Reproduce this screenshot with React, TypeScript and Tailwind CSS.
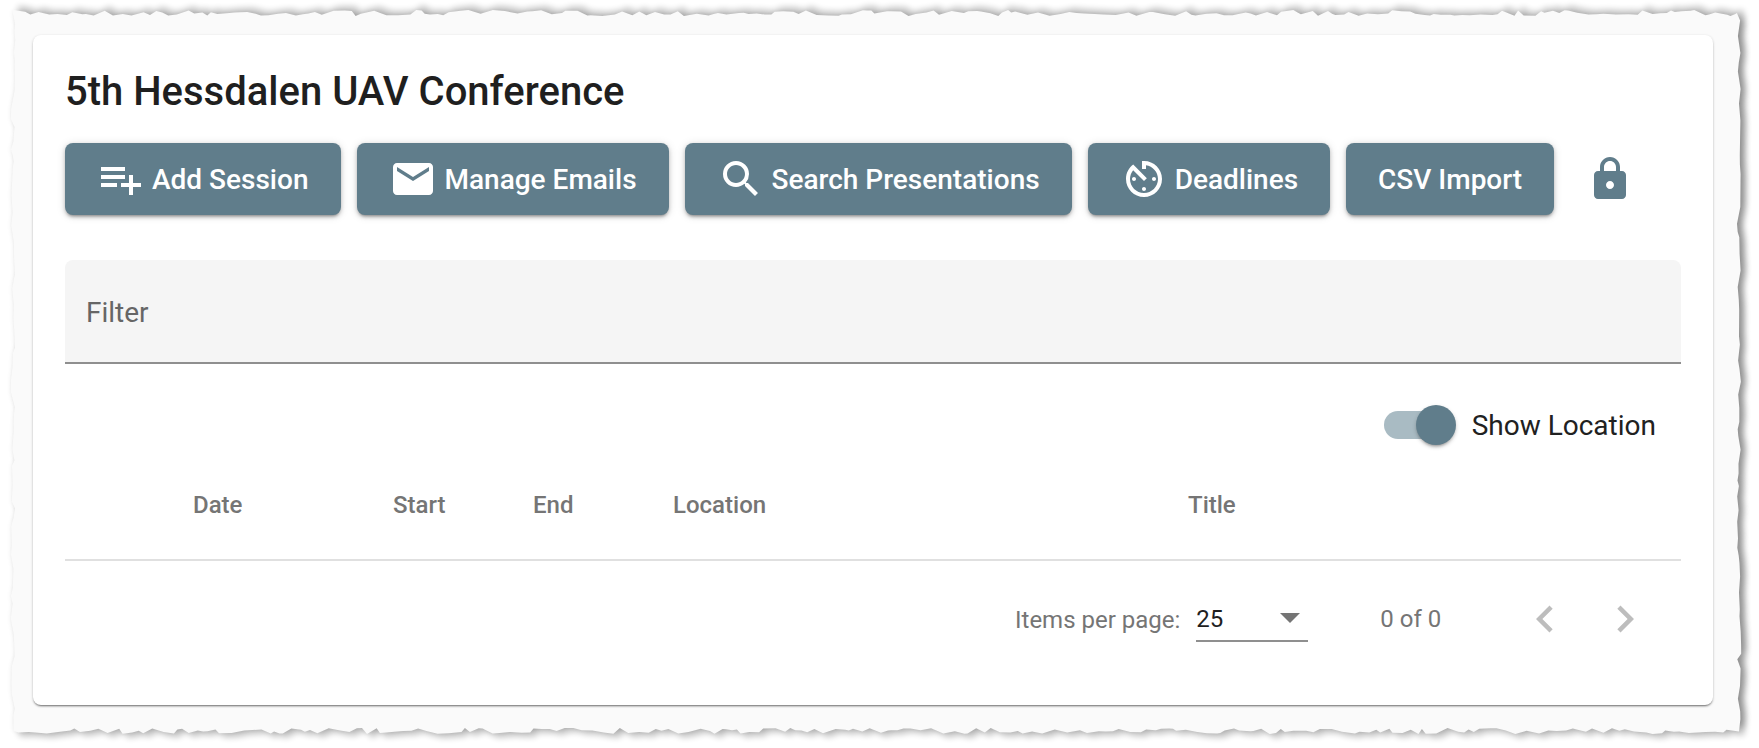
const ROBOTO = "font-['Roboto',sans-serif]"

// torn paper outline, seeded so every render gives the same edge
function tornEdge() {
  let seed = 7
  const rnd = () => {
    seed = (seed * 16807) % 2147483647
    return seed / 2147483647
  }
  const pts: string[] = []
  const L = 13, R = 1739, T = 13, B = 731
  const tooth = (amp: number) => (rnd() - 0.5) * 2 * amp
  for (let x = L; x < R; x += 3 + rnd() * 10) pts.push(`${x.toFixed(1)},${(T + tooth(3)).toFixed(1)}`)
  for (let y = T; y < B; y += 5 + rnd() * 14) pts.push(`${(R + tooth(2.2)).toFixed(1)},${y.toFixed(1)}`)
  for (let x = R; x > L; x -= 3 + rnd() * 10) pts.push(`${x.toFixed(1)},${(B + tooth(3)).toFixed(1)}`)
  for (let y = B; y > T; y -= 5 + rnd() * 14) pts.push(`${(L + tooth(2.2)).toFixed(1)},${y.toFixed(1)}`)
  return pts.join(' ')
}

function Paper() {
  const pts = tornEdge()
  return (
    <svg className="absolute inset-0" width="1759" height="748" viewBox="0 0 1759 748">
      <defs>
        <filter id="soft" x="-2%" y="-4%" width="104%" height="108%">
          <feGaussianBlur stdDeviation="3" />
        </filter>
        <filter id="faint" x="-2%" y="-4%" width="104%" height="108%">
          <feGaussianBlur stdDeviation="2" />
        </filter>
      </defs>
      <polygon points={pts} fill="#000" opacity="0.05" filter="url(#faint)" transform="translate(-1 0)" />
      <polygon points={pts} fill="#000" opacity="0.24" filter="url(#soft)" transform="translate(5 -4)" />
      <polygon points={pts} fill="#000" opacity="0.24" filter="url(#soft)" transform="translate(5 4)" />
      <polygon points={pts} fill="#fafafa" />
    </svg>
  )
}

function Btn({ icon, label, wide }: { icon?: React.ReactNode; label: string; wide?: boolean }) {
  return (
    <button className={`${wide ? 'pl-[32px] pr-[33px]' : 'px-[32px]'} h-[72px] shrink-0 flex items-center gap-[7px] rounded-[8px] bg-[#607d8b] text-white text-[28px] font-medium shadow-[0_3px_3px_-2px_rgba(0,0,0,0.3),0_2px_4px_rgba(0,0,0,0.2),0_1px_10px_rgba(0,0,0,0.12)]`}>
      {icon}
      <span className="pt-[2px]">{label}</span>
    </button>
  )
}

const Icon = ({ d }: { d: string }) => (
  <svg width="48" height="48" viewBox="0 0 24 24" fill="#fff">
    <path d={d} />
  </svg>
)

const PLAYLIST_ADD = 'M14 10H2v2h12v-2zm0-4H2v2h12V6zm4 8v-4h-2v4h-4v2h4v4h2v-4h4v-2h-4zM2 16h8v-2H2v2z'
const EMAIL = 'M20 4H4c-1.1 0-1.99.9-1.99 2L2 18c0 1.1.9 2 2 2h16c1.1 0 2-.9 2-2V6c0-1.1-.9-2-2-2zm0 4l-8 5-8-5V6l8 5 8-5v2z'
const SEARCH = 'M15.5 14h-.79l-.28-.27A6.47 6.47 0 0 0 16 9.5 6.5 6.5 0 1 0 9.5 16c1.61 0 3.09-.59 4.23-1.57l.27.28v.79l5 4.99L20.49 19l-4.99-5zm-6 0C7.01 14 5 11.99 5 9.5S7.01 5 9.5 5 14 7.01 14 9.5 11.99 14 9.5 14z'
const AV_TIMER = 'M11 17c0 .55.45 1 1 1s1-.45 1-1-.45-1-1-1-1 .45-1 1zm0-14v4h2V5.08c3.39.49 6 3.39 6 6.92 0 3.87-3.13 7-7 7s-7-3.13-7-7c0-1.68.59-3.22 1.58-4.42L12 13l1.41-1.41-6.8-6.8v.02C4.42 6.45 3 9.05 3 12c0 4.97 4.02 9 9 9 4.97 0 9-4.03 9-9s-4.03-9-9-9h-1zm7 9c0-.55-.45-1-1-1s-1 .45-1 1 .45 1 1 1 1-.45 1-1zM6 12c0 .55.45 1 1 1s1-.45 1-1-.45-1-1-1-1 .45-1 1z'

function Toggle() {
  return (
    <div className="relative w-[64px] h-[28px] rounded-full bg-[#a9bbc3]">
      <div className="absolute right-[-8px] top-[-6px] w-[40px] h-[40px] rounded-full bg-[#607d8b] shadow-[0_3px_3px_-2px_rgba(0,0,0,0.3),0_2px_4px_rgba(0,0,0,0.2)]" />
    </div>
  )
}

export default function App() {
  return (
    <div className={`relative w-[1759px] h-[748px] overflow-hidden bg-white ${ROBOTO}`}>
      <Paper />
      <div className="relative pl-[33px] pt-[35px]">
        <div className="w-[1680px] h-[670px] bg-white rounded-[8px] shadow-[0_2px_2px_-1px_rgba(0,0,0,0.45),0_1px_3px_rgba(0,0,0,0.2)] px-[32px] flex flex-col">
          <h1 className="mt-[25px] h-[64px] flex items-center text-[40px] font-medium text-[#1f1f1f]">5th Hessdalen UAV Conference</h1>

          <div className="mt-[19px] flex items-center gap-[16px]">
            <Btn icon={<Icon d={PLAYLIST_ADD} />} label="Add Session" wide />
            <Btn icon={<Icon d={EMAIL} />} label="Manage Emails" />
            <Btn icon={<Icon d={SEARCH} />} label="Search Presentations" />
            <Btn icon={<Icon d={AV_TIMER} />} label="Deadlines" />
            <Btn label="CSV Import" />
            <svg width="48" height="48" viewBox="0 0 24 24" fill="#607d8b" className="ml-[16px]">
              <path d="M18 8h-1V6c0-2.76-2.24-5-5-5S7 3.24 7 6v2H6c-1.1 0-2 .9-2 2v10c0 1.1.9 2 2 2h12c1.1 0 2-.9 2-2V10c0-1.1-.9-2-2-2zm-6 9c-1.1 0-2-.9-2-2s.9-2 2-2 2 .9 2 2-.9 2-2 2zM9 8V6c0-1.66 1.34-3 3-3s3 1.34 3 3v2H9z" />
            </svg>
          </div>

          <div className="mt-[45px] w-[1616px] h-[104px] rounded-t-[8px] bg-[#f5f5f5] border-b-2 border-[#8f8f8f] flex items-center pl-[21px] pt-[3px] text-[28px] text-[#666666]">
            Filter
          </div>

          <div className="mt-[41px] w-[1616px] h-[40px] flex items-center justify-end pr-[25px] gap-[16px]">
            <Toggle />
            <span className="ml-[8px] pt-[1px] text-[28px] text-[#212121]">Show Location</span>
          </div>

          <div className="mt-[41px] w-[1616px] h-[75px] border-b-2 border-[#e0e0e0] pb-[36px] text-[24px] font-medium text-[#757575] grid grid-cols-[128px_200px_140px_140px_515px_1fr] items-center">
            <span />
            <span>Date</span>
            <span>Start</span>
            <span>End</span>
            <span>Location</span>
            <span>Title</span>
          </div>

          <div className="mt-[35px] w-[1616px] flex items-start text-[24px] text-[#757575]">
            <span className="ml-[950px] mt-[6px]">Items per page:</span>
            <div className="ml-[16px] w-[112px] h-[46px] border-b-2 border-[#8f8f8f] flex items-start justify-between pr-[8px] pt-[5px]">
              <span className="text-[#1f1f1f]">25</span>
              <span className="mt-[12px] w-0 h-0 border-x-[10px] border-x-transparent border-t-[10px] border-t-[#757575]" />
            </div>
            <span className="ml-[72px] mt-[5px]">0 of 0</span>
            <svg width="54" height="54" viewBox="0 0 24 24" fill="#bdbdbd" className="ml-[77px] -mt-[4px]">
              <path d="M15.41 7.41L14 6l-6 6 6 6 1.41-1.41L10.83 12z" />
            </svg>
            <svg width="54" height="54" viewBox="0 0 24 24" fill="#bdbdbd" className="ml-[26px] -mt-[4px]">
              <path d="M10 6L8.59 7.41 13.17 12l-4.58 4.59L10 18l6-6z" />
            </svg>
          </div>
        </div>
      </div>
    </div>
  )
}
